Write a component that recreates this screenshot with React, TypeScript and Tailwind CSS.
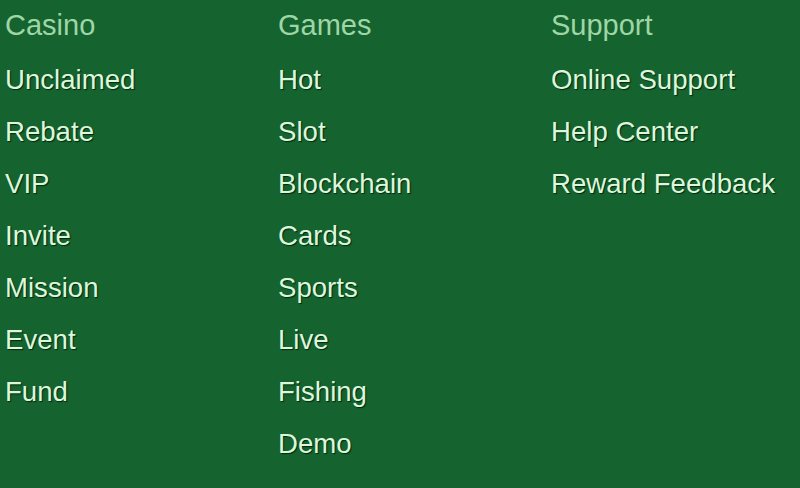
const columns = [
  {
    title: 'Casino',
    links: ['Unclaimed', 'Rebate', 'VIP', 'Invite', 'Mission', 'Event', 'Fund'],
  },
  {
    title: 'Games',
    links: ['Hot', 'Slot', 'Blockchain', 'Cards', 'Sports', 'Live', 'Fishing', 'Demo'],
  },
  {
    title: 'Support',
    links: ['Online Support', 'Help Center', 'Reward Feedback'],
  },
];

export default function App() {
  return (
    <div className="w-[800px] h-[488px] bg-[#15632f] overflow-hidden font-['Liberation_Sans',Arial,sans-serif]">
      <div className="grid grid-cols-[273px_273px_254px] pl-[5px] pt-[8px]">
        {columns.map((col) => (
          <div key={col.title} className="flex flex-col">
            <h3 className="text-[29px] leading-[34px] text-[#9fd6a6] mb-[12px]">{col.title}</h3>
            <ul className="flex flex-col">
              {col.links.map((link) => (
                <li
                  key={link}
                  className="text-[27.6px] leading-[52px] text-[#dcf7dc] [text-shadow:1px_1px_1px_rgba(0,30,10,0.85)]"
                >
                  {link}
                </li>
              ))}
            </ul>
          </div>
        ))}
      </div>
    </div>
  );
}
